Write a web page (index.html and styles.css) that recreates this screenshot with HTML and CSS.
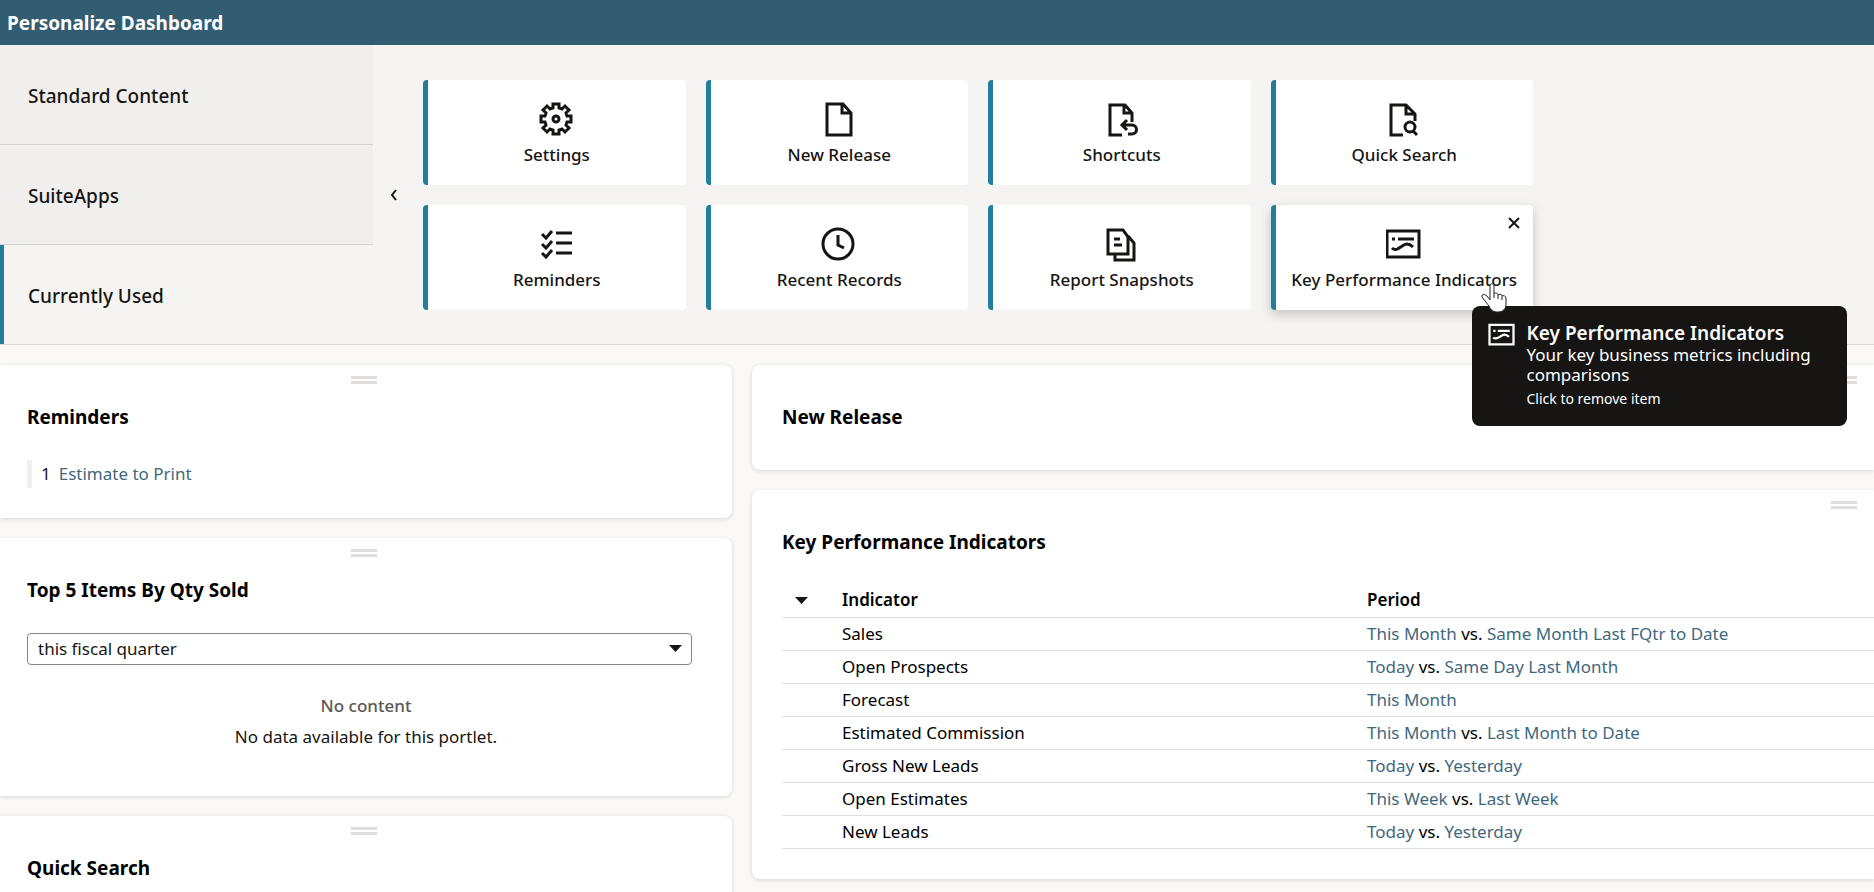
FILE: index.html
```html
<!DOCTYPE html>
<html lang="en">
<head>
    <meta charset="UTF-8">
    <meta name="viewport" content="width=device-width, initial-scale=1.0">
    <title>Personalize Dashboard</title>
    <link rel="stylesheet" href="styles.css">
</head>
<body>
    <header class="titlebar">
        <h1>Personalize Dashboard</h1>
    </header>

    <section class="personalize">
        <nav class="categories">
            <button class="category">Standard Content</button>
            <button class="category">SuiteApps</button>
            <button class="category active">Currently Used</button>
        </nav>

        <button class="collapse" aria-label="Collapse">
            <svg width="8" height="14" viewBox="0 0 8 14"><path d="M7 2L3 7l4 5"/></svg>
        </button>

        <div class="tiles">
            <button class="tile">
                <svg class="icon" viewBox="0 0 36 36">
                    <path d="M14 3h6v4l3 1 3-3 4 4-3 3 1 3h4v6h-4l-1 3 3 3-4 4-3-3-3 1v4h-6v-4l-3-1-3 3-4-4 3-3-1-3H2v-6h4l1-3-3-3 4-4 3 3 3-1z"/>
                    <circle cx="17" cy="18" r="3"/>
                </svg>
                <span>Settings</span>
            </button>
            <button class="tile">
                <svg class="icon" viewBox="0 0 36 36">
                    <path d="M6 3h16l8 9v22H6zM21 3v9h9"/>
                </svg>
                <span>New Release</span>
            </button>
            <button class="tile">
                <svg class="icon" viewBox="0 0 36 36">
                    <path d="M18 34H6V4h15l7 8v9M20 4v8h8M23 19l-5 5 5 5M19 24h9a4 4 0 0 1 0 9h-4"/>
                </svg>
                <span>Shortcuts</span>
            </button>
            <button class="tile">
                <svg class="icon" viewBox="0 0 36 36">
                    <path d="M17 34H5V4h15l9 9v7M20 4v9h9M27 30l4 4"/>
                    <circle cx="24" cy="26" r="5"/>
                </svg>
                <span>Quick Search</span>
            </button>
            <button class="tile">
                <svg class="icon" viewBox="0 0 36 36">
                    <path d="M3 8l4 4 6-7M3 18l4 4 6-7M3 27l4 4 6-7M17 7h16M17 17h16M17 27h16"/>
                </svg>
                <span>Reminders</span>
            </button>
            <button class="tile">
                <svg class="icon" viewBox="0 0 36 36">
                    <circle cx="17" cy="18" r="15"/>
                    <path d="M17 9v10l6 3"/>
                </svg>
                <span>Recent Records</span>
            </button>
            <button class="tile">
                <svg class="icon" viewBox="0 0 36 36">
                    <path d="M4 4h15l5 7v17H4zM24 10l6 7v17H11v-6M10 13h6M10 19h8"/>
                </svg>
                <span>Report Snapshots</span>
            </button>
            <div class="tile-wrap">
                <button class="tile hovered">
                    <svg class="icon" viewBox="0 0 36 36">
                        <path d="M1 5h32v26H1zM6 13h3M12 13h16M6 22c5 5 10-4 15-4 3 0 4 1 6 3"/>
                    </svg>
                    <span>Key Performance Indicators</span>
                </button>
                <button class="remove" aria-label="Remove">
                    <svg width="12" height="12" viewBox="0 0 12 12"><path d="M1 1l10 10M11 1L1 11"/></svg>
                </button>
                <div class="tooltip" role="tooltip">
                    <svg class="tooltip-icon" viewBox="0 0 36 36">
                        <path d="M2 5h32v26H2zM7 13h3M13 13h16M7 22c5 5 10-4 15-4 3 0 4 1 6 3"/>
                    </svg>
                    <div>
                        <strong>Key Performance Indicators</strong>
                        <p>Your key business metrics including comparisons</p>
                        <small>Click to remove item</small>
                    </div>
                </div>
                <svg class="pointer" width="26" height="30" viewBox="0 0 26 30">
                    <path d="M9 17V3c0-3 4-3 4 0v8c1-2 4-1 4 1 1-1 4-1 4 1 1-1 4 0 4 2v6c0 5-3 8-8 8-5 0-7-2-9-6l-7-9c-1-3 3-3 5-1z"/>
                    <path d="M13 11v4M17 12v4M21 13v4"/>
                </svg>
            </div>
        </div>
    </section>

    <main class="dashboard">
        <div class="column left">
            <section class="portlet">
                <div class="grip"></div>
                <h2>Reminders</h2>
                <div class="reminder"><span>1</span><a href="#">Estimate to Print</a></div>
            </section>
            <section class="portlet">
                <div class="grip"></div>
                <h2>Top 5 Items By Qty Sold</h2>
                <div class="range">
                    <select aria-label="Period">
                        <option>this fiscal quarter</option>
                    </select>
                    <svg width="13" height="7" viewBox="0 0 13 7"><path d="M0 0h13L6.500 7z"/></svg>
                </div>
                <div class="empty">
                    <strong>No content</strong>
                    <p>No data available for this portlet.</p>
                </div>
            </section>
            <section class="portlet">
                <div class="grip"></div>
                <h2>Quick Search</h2>
            </section>
        </div>

        <div class="column right">
            <section class="portlet">
                <div class="grip"></div>
                <h2>New Release</h2>
            </section>
            <section class="portlet">
                <div class="grip"></div>
                <h2>Key Performance Indicators</h2>
                <table class="kpi">
                    <thead>
                        <tr>
                            <th class="toggle"><svg width="13" height="7" viewBox="0 0 13 7"><path d="M0 0h13L6.500 7z"/></svg></th>
                            <th>Indicator</th>
                            <th>Period</th>
                        </tr>
                    </thead>
                    <tbody>
                        <tr><td></td><td>Sales</td><td><a href="#">This Month</a> vs. <a href="#">Same Month Last FQtr to Date</a></td></tr>
                        <tr><td></td><td>Open Prospects</td><td><a href="#">Today</a> vs. <a href="#">Same Day Last Month</a></td></tr>
                        <tr><td></td><td>Forecast</td><td><a href="#">This Month</a></td></tr>
                        <tr><td></td><td>Estimated Commission</td><td><a href="#">This Month</a> vs. <a href="#">Last Month to Date</a></td></tr>
                        <tr><td></td><td>Gross New Leads</td><td><a href="#">Today</a> vs. <a href="#">Yesterday</a></td></tr>
                        <tr><td></td><td>Open Estimates</td><td><a href="#">This Week</a> vs. <a href="#">Last Week</a></td></tr>
                        <tr><td></td><td>New Leads</td><td><a href="#">Today</a> vs. <a href="#">Yesterday</a></td></tr>
                    </tbody>
                </table>
            </section>
        </div>
    </main>
</body>
</html>
```

FILE: styles.css
```css
* {
    box-sizing: border-box;
}
body {
    margin: 0;
    font-family: "Noto Sans", "Open Sans", sans-serif;
    font-size: 17px;
    line-height: 24px;
    color: #161513;
    background-color: #fbf9f8;
    overflow: hidden;
}
h1, h2, p {
    margin: 0;
}
button {
    font: inherit;
    color: inherit;
    border: none;
    padding: 0;
    cursor: pointer;
}
a {
    color: #3f687e;
    text-decoration: none;
}
svg {
    fill: none;
    stroke: currentColor;
}

/* Title bar */
.titlebar {
    background-color: #325c72;
    color: #fff;
    padding: 11px 7px 10px;
}
.titlebar h1 {
    font-size: 19px;
    font-weight: 700;
    line-height: 24px;
}

/* Personalize panel */
.personalize {
    display: flex;
    background-color: #f5f4f2;
    border-bottom: 1px solid #d9d8d6;
}
.categories {
    width: 373px;
    flex: none;
}
.category {
    display: block;
    width: 100%;
    height: 100px;
    padding: 2px 0 0 28px;
    text-align: left;
    font-size: 19px;
    font-weight: 500;
    background-color: #f1efed;
    border-bottom: 1px solid #d4d3d1;
}
.category.active {
    height: 99px;
    padding-left: 24px;
    background-color: #f5f4f2;
    border-bottom: none;
    border-left: 4px solid #227e9e;
}
.collapse {
    width: 40px;
    background: none;
}
.collapse svg {
    display: block;
    margin: 0 auto;
    stroke-width: 2;
}
.tiles {
    display: grid;
    grid-template-columns: repeat(4, 1fr);
    gap: 20px;
    align-content: start;
    width: 1120px;
    padding: 35px 0 34px 10px;
}
.tile-wrap {
    position: relative;
}
.tile {
    display: flex;
    flex-direction: column;
    align-items: center;
    width: 100%;
    height: 105px;
    padding-top: 21px;
    font-weight: 500;
    white-space: nowrap;
    background-color: #fff;
    border-left: 5px solid #227e9e;
    border-radius: 4px;
}
.tile.hovered {
    box-shadow: 0 4px 12px rgba(0, 0, 0, 0.2);
}
.icon {
    width: 36px;
    height: 36px;
    margin-bottom: 6px;
    stroke-width: 3;
}
.remove {
    position: absolute;
    top: 12px;
    right: 13px;
    display: flex;
    background: none;
}
.remove svg {
    stroke-width: 2;
}
.tooltip {
    position: absolute;
    z-index: 1;
    top: 101px;
    left: 201px;
    display: flex;
    gap: 12px;
    width: 375px;
    padding: 15px 16px;
    color: #fff;
    background-color: #161513;
    border-radius: 8px;
}
.tooltip-icon {
    flex: none;
    width: 27px;
    height: 27px;
    stroke-width: 3;
}
.tooltip strong {
    display: block;
    font-size: 19px;
    font-weight: 600;
    line-height: 24px;
}
.tooltip p {
    line-height: 20px;
}
.tooltip small {
    display: block;
    margin-top: 2px;
    font-size: 14px;
}
.pointer {
    position: absolute;
    z-index: 2;
    top: 78px;
    left: 210px;
    pointer-events: none;
}
.pointer path {
    fill: #fff;
    stroke: #222;
}

/* Dashboard portlets */
.dashboard {
    display: flex;
    gap: 20px;
    padding-top: 20px;
}
.column {
    display: flex;
    flex-direction: column;
    gap: 20px;
}
.left {
    flex: 732;
    min-width: 0;
}
.right {
    flex: 1122;
    min-width: 0;
}
.portlet {
    position: relative;
    min-height: 105px;
    padding: 40px 40px 30px 27px;
    background-color: #fff;
    border-radius: 0 8px 8px 0;
    box-shadow: 0 1px 4px rgba(0, 0, 0, 0.15);
}
.right .portlet {
    padding: 40px 0 30px 30px;
    border-radius: 8px 0 0 8px;
}
.portlet h2 {
    font-size: 19px;
    font-weight: 700;
    line-height: 24px;
    color: #000;
}
.grip {
    position: absolute;
    top: 11px;
    left: 351px;
    width: 26px;
    height: 8px;
    border-top: 3px solid #dfdedc;
    border-bottom: 3px solid #dfdedc;
}
.right .grip {
    left: auto;
    right: 17px;
}
.reminder {
    display: flex;
    gap: 8px;
    margin-top: 31px;
    padding: 2px 9px;
    border-left: 5px solid #f1efed;
}
.range {
    position: relative;
    margin-top: 31px;
}
.range select {
    appearance: none;
    display: block;
    width: 100%;
    height: 32px;
    padding: 0 10px;
    font: inherit;
    color: inherit;
    background-color: #fff;
    border: 1px solid #8b8580;
    border-radius: 4px;
}
.range svg {
    position: absolute;
    top: 12px;
    right: 10px;
    fill: #161513;
    stroke: none;
    pointer-events: none;
}
.empty {
    margin: 29px -13px 17px 0;
    text-align: center;
}
.empty strong {
    font-weight: 500;
    color: #5b5652;
}
.empty p {
    margin-top: 7px;
}
.kpi {
    width: 100%;
    margin-top: 30px;
    border-collapse: collapse;
    color: #000;
}
.kpi th, .kpi td {
    height: 33px;
    padding: 0;
    text-align: left;
    border-bottom: 1px solid #e1e0de;
}
.kpi th {
    font-weight: 600;
}
.kpi th:nth-child(1) {
    width: 60px;
}
.kpi th:nth-child(2) {
    width: 525px;
}
.toggle svg {
    display: block;
    margin-left: 13px;
    fill: #161513;
    stroke: none;
}
```
